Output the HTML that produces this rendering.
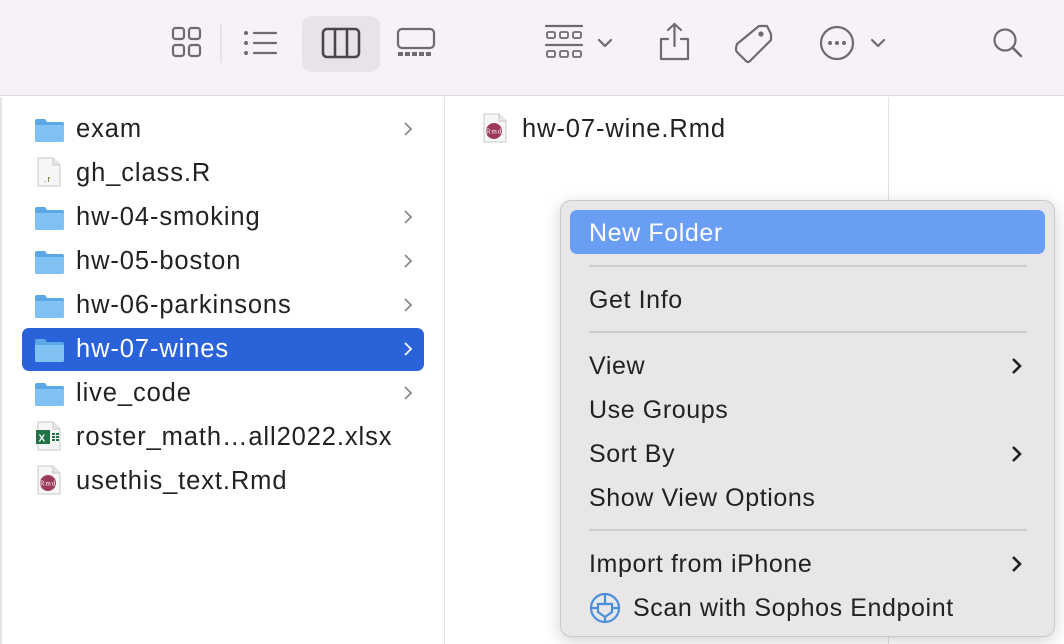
<!DOCTYPE html>
<html><head><meta charset="utf-8"><style>
*{margin:0;padding:0;box-sizing:border-box}
body{width:1064px;height:644px;overflow:hidden;background:#fff;font-family:"Liberation Sans",sans-serif;position:relative;color:#222}
.tb{position:absolute;left:0;top:0;width:1064px;height:96px;background:#f6f2f7;border-bottom:1px solid #dcdadc}
.ic{position:absolute}
.col1{position:absolute;left:0;top:97px;width:445px;height:547px;border-right:1px solid #e2e2e2;border-left:2px solid #e6e6e6}
.col2{position:absolute;left:446px;top:97px;width:443px;height:547px;border-right:1px solid #e2e2e2}
.row{position:absolute;left:22px;width:402px;height:43px;font-size:25.5px;letter-spacing:0.9px;line-height:43px;white-space:nowrap}
.row .t{position:absolute;left:54px;top:0}
.row .i{position:absolute;left:12px;top:10px}
.row .ch{position:absolute;left:380px;top:13px}
.sel{background:#2a62d9;color:#fff;border-radius:7px}
.menu{position:absolute;left:560px;top:200px;width:495px;height:437px;background:#e8e6e8;border:1px solid #c9c7c9;border-radius:11px;box-shadow:0 4px 16px rgba(0,0,0,.18)}
.mi{position:absolute;left:28px;font-size:25px;letter-spacing:0.6px;line-height:30px;color:#222;white-space:nowrap}
.hl{position:absolute;left:9px;top:9px;width:475px;height:44px;background:#6a9ef5;border-radius:7px}
.sep{position:absolute;left:28px;width:438px;height:2px;background:#cdcbcd}
.mch{position:absolute;left:449px}
</style></head><body>
<div class="tb">
<svg class="ic" style="left:0;top:0" width="1064" height="96" fill="none" stroke="#6e6a70" stroke-width="2.2" stroke-linecap="round" stroke-linejoin="round">
<rect x="173" y="28" width="11" height="11" rx="2.5"/><rect x="189" y="28" width="11" height="11" rx="2.5"/>
<rect x="173" y="45" width="11" height="11" rx="2.5"/><rect x="189" y="45" width="11" height="11" rx="2.5"/>
<line x1="221" y1="25" x2="221" y2="62" stroke="#e0dde2" stroke-width="1.5"/>
<rect x="302" y="16" width="78" height="56" rx="10" fill="#e7e3e8" stroke="none"/>
<g fill="#6e6a70" stroke="none"><circle cx="246" cy="33" r="2"/><circle cx="246" cy="43" r="2"/><circle cx="246" cy="53" r="2"/></g>
<line x1="254" y1="33" x2="276" y2="33"/><line x1="254" y1="43" x2="276" y2="43"/><line x1="254" y1="53" x2="276" y2="53"/>
<rect x="323" y="29" width="36" height="28" rx="4" stroke="#4a464c" stroke-width="2.6"/><line x1="335" y1="29" x2="335" y2="57" stroke="#4a464c" stroke-width="2.6"/><line x1="347" y1="29" x2="347" y2="57" stroke="#4a464c" stroke-width="2.6"/>
<rect x="398" y="29" width="36" height="19" rx="4"/>
<g fill="#6e6a70" stroke="none"><rect x="398" y="52" width="5" height="4"/><rect x="405" y="52" width="5" height="4"/><rect x="412" y="52" width="5" height="4"/><rect x="419" y="52" width="5" height="4"/><rect x="426" y="52" width="5" height="4"/></g>
<line x1="546" y1="26" x2="582" y2="26"/><line x1="546" y1="45" x2="582" y2="45"/>
<g stroke-width="1.8"><rect x="547" y="32" width="8" height="6" rx="1.5"/><rect x="560" y="32" width="8" height="6" rx="1.5"/><rect x="573" y="32" width="8" height="6" rx="1.5"/>
<rect x="547" y="51" width="8" height="6" rx="1.5"/><rect x="560" y="51" width="8" height="6" rx="1.5"/><rect x="573" y="51" width="8" height="6" rx="1.5"/></g>
<polyline points="599,40 605,46 611,40"/>
<path d="M668 39 H661 V59 H688 V39 H681"/><line x1="674.5" y1="24" x2="674.5" y2="46"/><polyline points="668,30 674.5,24 681,30"/>
<path d="M737 44 L759 26 H767 L771 34 V40 L750 61 Q748 63 746 61 L737 52 Q735 50 737 44 Z"/><circle cx="761" cy="34" r="1.5" fill="#6e6a70"/>
<circle cx="837" cy="43" r="16"/><g fill="#6e6a70" stroke="none"><circle cx="830" cy="43" r="2"/><circle cx="837" cy="43" r="2"/><circle cx="844" cy="43" r="2"/></g>
<polyline points="872,40 878,46 884,40"/>
<circle cx="1005" cy="40" r="10.5"/><line x1="1013" y1="48" x2="1021" y2="56" stroke-width="2.6"/>
</svg>
</div>

<div class="col1"></div>
<div class="col2"></div>

<svg width="0" height="0" style="position:absolute"><defs>
<g id="fold"><path d="M1 3 Q1 1 3 1 H11 L13 4 H28 Q30 4 30 6 V22 Q30 24 28 24 H3 Q1 24 1 22 Z" fill="#5aa9e6"/><path d="M1 7 H30 V22 Q30 24 28 24 H3 Q1 24 1 22 Z" fill="#7fc1f2"/></g>
<g id="doc"><path d="M4 1 H19 L26 8 V29 H4 Z" fill="#f6f6f6" stroke="#c8c8c8"/><path d="M19 1 V8 H26" fill="#e8e8e8" stroke="#c8c8c8"/></g>
<g id="rmd"><use href="#doc"/><circle cx="14" cy="18" r="8" fill="#9b3a5a"/><text x="14" y="20.5" font-size="7" fill="#fff" text-anchor="middle" font-family="Liberation Serif">Rmd</text></g>
</defs></svg>

<div class="row" style="top:108px"><svg class="i" width="32" height="26"><use href="#fold"/></svg><span class="t">exam</span><svg class="ch" width="12" height="16"><polyline points="3,2 9,8 3,14" fill="none" stroke="#8a8a8a" stroke-width="1.8"/></svg></div>
<div class="row" style="top:152px"><svg class="i" style="top:5px" width="30" height="31"><use href="#doc"/><text x="10" y="25" font-size="9" fill="#6a7a2a">.r</text></svg><span class="t">gh_class.R</span></div>
<div class="row" style="top:196px"><svg class="i" width="32" height="26"><use href="#fold"/></svg><span class="t">hw-04-smoking</span><svg class="ch" width="12" height="16"><polyline points="3,2 9,8 3,14" fill="none" stroke="#8a8a8a" stroke-width="1.8"/></svg></div>
<div class="row" style="top:240px"><svg class="i" width="32" height="26"><use href="#fold"/></svg><span class="t">hw-05-boston</span><svg class="ch" width="12" height="16"><polyline points="3,2 9,8 3,14" fill="none" stroke="#8a8a8a" stroke-width="1.8"/></svg></div>
<div class="row" style="top:284px"><svg class="i" width="32" height="26"><use href="#fold"/></svg><span class="t">hw-06-parkinsons</span><svg class="ch" width="12" height="16"><polyline points="3,2 9,8 3,14" fill="none" stroke="#8a8a8a" stroke-width="1.8"/></svg></div>
<div class="row sel" style="top:328px"><svg class="i" width="32" height="26"><use href="#fold"/></svg><span class="t">hw-07-wines</span><svg class="ch" width="12" height="16"><polyline points="3,2 9,8 3,14" fill="none" stroke="#fff" stroke-width="1.8"/></svg></div>
<div class="row" style="top:372px"><svg class="i" width="32" height="26"><use href="#fold"/></svg><span class="t">live_code</span><svg class="ch" width="12" height="16"><polyline points="3,2 9,8 3,14" fill="none" stroke="#8a8a8a" stroke-width="1.8"/></svg></div>
<div class="row" style="top:416px"><svg class="i" style="top:5px" width="30" height="31"><use href="#doc"/><rect x="2" y="9" width="14" height="14" fill="#217346"/><text x="4.5" y="20.5" font-size="10" fill="#fff" font-weight="bold">X</text><g fill="#217346"><rect x="18" y="12" width="3" height="2"/><rect x="22" y="12" width="3" height="2"/><rect x="18" y="15" width="3" height="2"/><rect x="22" y="15" width="3" height="2"/><rect x="18" y="18" width="3" height="2"/><rect x="22" y="18" width="3" height="2"/></g></svg><span class="t">roster_math…all2022.xlsx</span></div>
<div class="row" style="top:460px"><svg class="i" style="top:5px" width="30" height="31"><use href="#rmd"/></svg><span class="t">usethis_text.Rmd</span></div>
<div class="row" style="top:108px;left:468px"><svg class="i" style="top:5px" width="30" height="31"><use href="#rmd"/></svg><span class="t">hw-07-wine.Rmd</span></div>

<div class="menu">
<div class="hl"></div>
<div class="mi" style="top:17px;color:#fff">New Folder</div>
<div class="sep" style="top:64px"></div>
<div class="mi" style="top:84px">Get Info</div>
<div class="sep" style="top:130px"></div>
<div class="mi" style="top:150px">View</div>
<div class="mi" style="top:194px">Use Groups</div>
<div class="mi" style="top:238px">Sort By</div>
<div class="mi" style="top:282px">Show View Options</div>
<div class="sep" style="top:328px"></div>
<div class="mi" style="top:348px">Import from iPhone</div>
<div class="mi" style="top:392px;left:72px">Scan with Sophos Endpoint</div>
<svg style="position:absolute;left:28px;top:391px" width="32" height="32" fill="none" stroke="#4a8fd8" stroke-width="2.2"><circle cx="16" cy="16" r="14"/><path d="M2 16 H9 V20 L16 25 L23 20 V16 H30 M16 25 V30 M9 16 V12 H23 V16 M16 2 V12"/></svg>
<svg class="mch" style="top:155px" width="14" height="20"><polyline points="3,3 10,10 3,17" fill="none" stroke="#222" stroke-width="2.6"/></svg>
<svg class="mch" style="top:243px" width="14" height="20"><polyline points="3,3 10,10 3,17" fill="none" stroke="#222" stroke-width="2.6"/></svg>
<svg class="mch" style="top:353px" width="14" height="20"><polyline points="3,3 10,10 3,17" fill="none" stroke="#222" stroke-width="2.6"/></svg>
</div>
</body></html>
